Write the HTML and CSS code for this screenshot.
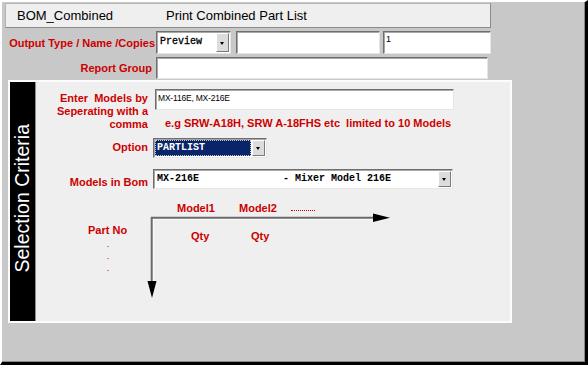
FILE: index.html
```html
<!DOCTYPE html>
<html lang="en">
<head>
    <meta charset="UTF-8">
    <title>BOM_Combined</title>
    <link rel="stylesheet" href="styles.css">
</head>
<body>
    <div class="window">
        <div class="titlebar">
            <span class="app-name">BOM_Combined</span>
            <span class="app-title">Print Combined Part List</span>
        </div>

        <div class="form-row row-output">
            <label class="top-label">Output Type / Name /Copies</label>
            <div class="combo combo-output">
                <span class="combo-value">Preview</span>
                <span class="combo-btn"></span>
            </div>
            <div class="field field-name"></div>
            <div class="field field-copies">1</div>
        </div>

        <div class="form-row row-group">
            <label class="top-label label-group">Report Group</label>
            <div class="field field-group"></div>
        </div>

        <div class="panel">
            <div class="sidebar"><span>Selection Criteria</span></div>
            <div class="criteria">
                <div class="crit-row row-models">
                    <label class="crit-label">Enter&nbsp; Models by<br>Seperating with a<br>comma</label>
                    <div class="models-col">
                        <div class="textarea">MX-116E, MX-216E</div>
                        <div class="hint">e.g SRW-A18H, SRW A-18FHS etc  limited to 10 Models</div>
                    </div>
                </div>

                <div class="crit-row row-option">
                    <label class="crit-label">Option</label>
                    <div class="combo combo-option">
                        <span class="combo-value selected">PARTLIST</span>
                        <span class="combo-btn"></span>
                    </div>
                </div>

                <div class="crit-row row-bom">
                    <label class="crit-label">Models in Bom</label>
                    <div class="combo combo-bom">
                        <span class="combo-value">MX-216E              - Mixer Model 216E</span>
                        <span class="combo-btn"></span>
                    </div>
                </div>

                <div class="diagram">
                    <svg class="axes" width="360" height="112" viewBox="0 0 360 112">
                        <line x1="116" y1="30" x2="338" y2="30" stroke="#ffffff" stroke-width="1"/>
                        <line x1="115" y1="28.7" x2="340" y2="28.7" stroke="#6a6a6a" stroke-width="2"/>
                        <polygon points="337,24.5 354,28.7 337,32.9" fill="#000"/>
                        <line x1="117.2" y1="30" x2="117.2" y2="92" stroke="#ffffff" stroke-width="1"/>
                        <line x1="115.7" y1="28" x2="115.7" y2="96" stroke="#6a6a6a" stroke-width="2"/>
                        <polygon points="111.5,92 120.5,92 116,109" fill="#000"/>
                    </svg>
                    <span class="axis-label model1">Model1</span>
                    <span class="axis-label model2">Model2</span>
                    <span class="more-dots"></span>
                    <span class="axis-label qty1">Qty</span>
                    <span class="axis-label qty2">Qty</span>
                    <span class="axis-label part-no">Part No</span>
                    <span class="part-dot dot1">-</span>
                    <span class="part-dot dot2">-</span>
                    <span class="part-dot dot3">-</span>
                </div>
            </div>
        </div>
    </div>
</body>
</html>
```

FILE: styles.css
```css
body {
    margin: 0;
    background-color: #c8c8c8;
    font-family: "Liberation Sans", Arial, sans-serif;
    color: #000;
}

.window {
    width: 588px;
    height: 365px;
    box-sizing: border-box;
    border-style: solid;
    border-width: 2px 3px 3px 2px;
    border-color: #fff #000 #000 #fff;
    box-shadow: inset -1px -1px 0 #8a8a8a;
    background-color: #c8c8c8;
}

/* title strip */
.titlebar {
    margin: 1px 0 0 3px;
    width: 486px;
    height: 25px;
    box-sizing: border-box;
    display: flex;
    align-items: center;
    padding-left: 11px;
    background-color: #efefef;
    border: 1px solid #b4b4b4;
    border-right-color: #8a8a8a;
    border-bottom-color: #8a8a8a;
    font-size: 13px;
}
.app-name {
    width: 149px;
}

/* top rows */
.form-row {
    display: flex;
    align-items: center;
}
.row-output {
    margin-top: 3px;
    height: 23px;
}
.row-group {
    margin-top: 3px;
    height: 22px;
}
.top-label {
    width: 153px;
    margin-right: 1px;
    text-align: right;
    color: #cc0000;
    font-weight: bold;
    font-size: 11px;
}
.label-group {
    padding-right: 3px;
    box-sizing: border-box;
}

.field,
.combo,
.textarea {
    box-sizing: border-box;
    background-color: #fff;
    border: 1px solid;
    border-color: #6e6e6e #e6e6e6 #e6e6e6 #6e6e6e;
    box-shadow: inset 1px 1px 0 #a8a8a8;
}
.field {
    height: 100%;
    font-size: 9px;
    padding: 2px 0 0 2px;
}
.field-name {
    width: 144px;
    margin-left: 5px;
}
.field-copies {
    width: 108px;
    margin-left: 3px;
}
.field-group {
    width: 332px;
}

/* combo boxes */
.combo {
    display: flex;
    height: 100%;
    padding: 1px;
}
.combo-value {
    flex: 1;
    font-family: "Liberation Mono", "Courier New", monospace;
    font-size: 10px;
    font-weight: bold;
    white-space: pre;
    padding-left: 2px;
    display: flex;
    align-items: center;
}
.combo-btn {
    width: 13px;
    box-sizing: border-box;
    background-color: #dcdcdc;
    border: 1px solid;
    border-color: #fff #7a7a7a #7a7a7a #fff;
    position: relative;
}
.combo-btn::after {
    content: "";
    position: absolute;
    left: 3px;
    top: 50%;
    margin-top: -1px;
    border-left: 2.5px solid transparent;
    border-right: 2.5px solid transparent;
    border-top: 3px solid #000;
}
.combo-output {
    width: 75px;
}
.combo-output .combo-value {
    align-items: flex-start;
    padding-top: 3px;
    font-weight: normal;
    -webkit-text-stroke: 0.3px #000;
}
.combo-option {
    width: 114px;
    height: 20px;
}
.combo-bom {
    width: 300px;
    height: 20px;
}
.selected {
    background-color: #0a246a;
    color: #fff;
    outline: 1px dotted #c8c8c8;
    outline-offset: -1px;
    margin-right: 1px;
}

/* selection panel */
.panel {
    margin: 1px 0 0 6px;
    width: 504px;
    height: 243px;
    box-sizing: border-box;
    border: 2px solid #fcfcfc;
    background-color: #efefef;
    display: flex;
}
.sidebar {
    width: 25px;
    background-color: #000;
    border-right: 1px solid #8c8c8c;
    display: flex;
    align-items: center;
    justify-content: center;
    padding-bottom: 7px;
}
.sidebar span {
    writing-mode: vertical-rl;
    transform: rotate(180deg);
    color: #fff;
    font-size: 19.5px;
    white-space: nowrap;
}

.criteria {
    flex: 1;
    display: flex;
    flex-direction: column;
    padding-top: 7px;
}
.crit-row {
    display: flex;
    gap: 5px;
}
.crit-label {
    width: 112px;
    flex: none;
    text-align: right;
    color: #cc0000;
    font-weight: bold;
    font-size: 11px;
    line-height: 13px;
}
.row-models .crit-label {
    margin-top: 2.5px;
}
.models-col {
    margin-left: 2px;
}
.textarea {
    width: 299px;
    height: 21px;
    font-size: 8.5px;
    padding: 3px 0 0 2px;
    letter-spacing: -0.2px;
}
.hint {
    margin-top: 7px;
    padding-left: 10px;
    white-space: pre;
    color: #cc0000;
    font-weight: bold;
    font-size: 11px;
    line-height: 13px;
}
.row-option {
    margin-top: 7px;
    align-items: center;
}
.row-bom {
    margin-top: 11px;
    align-items: flex-end;
}

/* axis diagram */
.diagram {
    flex: 1;
    position: relative;
}
.axes {
    position: absolute;
    left: 0;
    top: 0;
}
.axis-label {
    position: absolute;
    color: #cc0000;
    font-weight: bold;
    font-size: 11px;
    line-height: 13px;
}
.model1 { left: 141px; top: 13.5px; }
.model2 { left: 203px; top: 13.5px; }
.qty1 { left: 155px; top: 41.5px; }
.qty2 { left: 215px; top: 41.5px; }
.part-no { left: 52px; top: 35.5px; }
.more-dots {
    position: absolute;
    left: 255px;
    top: 21px;
    width: 24px;
    border-top: 1px dotted #cc0000;
}
.part-dot {
    position: absolute;
    left: 71px;
    color: #cc0000;
    font-size: 7px;
    line-height: 8px;
}
.dot1 { top: 53px; }
.dot2 { top: 65px; }
.dot3 { top: 77px; }
```
